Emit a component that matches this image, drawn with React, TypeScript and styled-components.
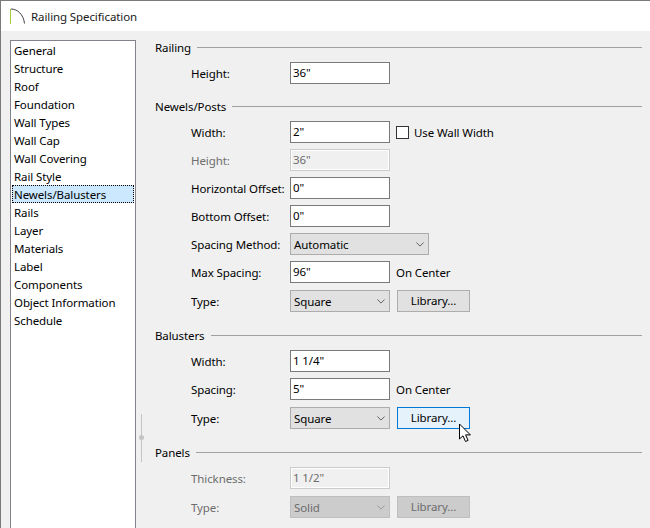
import React from "react";
import styled, { createGlobalStyle } from "styled-components";

const Global = createGlobalStyle`
  html, body { margin: 0; padding: 0; background: #f0f0f0; }
  body { font-family: "Noto Sans", "Open Sans", sans-serif; font-size: 11.5px; letter-spacing: -0.1px; color: #000; }
  #root { width: 650px; height: 528px; overflow: hidden; }
`;

const Window = styled.div`
  position: relative;
  width: 650px;
  height: 528px;
  box-sizing: border-box;
  border-top: 1px solid #7a7a7a;
  border-left: 1px solid #7a7a7a;
  background: #f0f0f0;
  overflow: hidden;
`;
const TitleBar = styled.div`
  height: 30px;
  background: #fff;
  display: flex;
  align-items: center;
  padding-left: 9px;
  gap: 5px;
  color: #1a1a1a;
`;
const Body = styled.div`
  display: flex;
  padding: 9px 0 0 9px;
  height: 488px;
`;
const List = styled.div`
  width: 126px;
  height: 520px;
  flex: none;
  box-sizing: border-box;
  border: 1px solid #82828a;
  background: #fff;
  padding: 0 1px;
  display: flex;
  flex-direction: column;
`;
const ListItem = styled.div<{ $selected?: boolean }>`
  height: 18px;
  line-height: 19px;
  box-sizing: border-box;
  padding-left: 2px;
  white-space: nowrap;
  ${(p) => (p.$selected ? "background:#cce8ff; outline:1px dotted #000; outline-offset:-1px;" : "")}
`;
const Form = styled.div`
  flex: 1;
  padding: 0 8px 0 19px;
  display: flex;
  flex-direction: column;
`;
const Section = styled.section<{ $mb: number }>`
  margin-bottom: ${(p) => p.$mb}px;
`;
const Heading = styled.div`
  display: flex;
  align-items: flex-start;
  gap: 6px;
  height: 14px;
  line-height: 16px;
  margin-bottom: 8px;
  &::after {
    content: "";
    flex: 1;
    height: 1px;
    margin-top: 7px;
    background: #a0a0a0;
  }
`;
const Row = styled.div<{ $mb?: number }>`
  display: flex;
  align-items: center;
  height: 22px;
  margin-bottom: ${(p) => p.$mb ?? 6}px;
  padding-left: 36px;
  &:last-child { margin-bottom: 0; }
`;
const Label = styled.div<{ $disabled?: boolean }>`
  width: 99px;
  flex: none;
  white-space: nowrap;
  color: ${(p) => (p.$disabled ? "#6d6d6d" : "#000")};
`;
const Input = styled.div<{ $disabled?: boolean }>`
  width: 100px;
  height: 22px;
  flex: none;
  box-sizing: border-box;
  border: 1px solid ${(p) => (p.$disabled ? "#cccccc" : "#7a7a7a")};
  background: ${(p) => (p.$disabled ? "#f0f0f0" : "#fff")};
  color: ${(p) => (p.$disabled ? "#6d6d6d" : "#000")};
  line-height: 19px;
  padding-left: 2px;
  ${(p) => (p.$disabled ? "box-shadow: inset 0 0 0 1px #fff;" : "")}
`;
const Select = styled.div<{ $w: number; $disabled?: boolean }>`
  width: ${(p) => p.$w}px;
  height: 22px;
  flex: none;
  box-sizing: border-box;
  border: 1px solid ${(p) => (p.$disabled ? "#bfbfbf" : "#acacac")};
  background: ${(p) => (p.$disabled ? "#cccccc" : "#e1e1e1")};
  color: ${(p) => (p.$disabled ? "#6d6d6d" : "#000")};
  display: flex;
  align-items: center;
  justify-content: space-between;
  padding: 0 4px 0 3px;
  svg { display: block; }
`;
const Button = styled.div<{ $disabled?: boolean; $hover?: boolean }>`
  width: 73px;
  height: 22px;
  flex: none;
  margin-left: 7px;
  box-sizing: border-box;
  border: 1px solid ${(p) => (p.$hover ? "#0078d7" : p.$disabled ? "#bfbfbf" : "#adadad")};
  background: ${(p) => (p.$hover ? "#e5f1fb" : p.$disabled ? "#cccccc" : "#e1e1e1")};
  color: ${(p) => (p.$disabled ? "#6d6d6d" : "#000")};
  text-align: center;
  line-height: 19px;
`;
const Note = styled.div`
  margin-left: 6px;
  white-space: nowrap;
`;
const CheckBox = styled.div`
  width: 13px;
  height: 13px;
  box-sizing: border-box;
  border: 1px solid #333;
  background: #fff;
  margin: 0 5px 0 6px;
  flex: none;
`;
const Splitter = styled.div`
  position: absolute;
  left: 140px;
  top: 413px;
  width: 1px;
  height: 48px;
  background: #c4c4c4;
  &::after {
    content: "";
    position: absolute;
    left: -2px;
    top: 21px;
    width: 5px;
    height: 5px;
    border-radius: 50%;
    background: #c4c4c4;
  }
`;
const Cursor = styled.svg`
  position: absolute;
  left: 457px;
  top: 422px;
`;

const Chevron = ({ color = "#606060" }: { color?: string }) => (
  <svg width="8" height="5" viewBox="0 0 8 5" fill="none">
    <path d="M.4.5L4 4.1 7.6.5" stroke={color} strokeWidth="1" />
  </svg>
);

const items = ["General","Structure","Roof","Foundation","Wall Types","Wall Cap","Wall Covering","Rail Style","Newels/Balusters","Rails","Layer","Materials","Label","Components","Object Information","Schedule"];

export default function App() {
  return (
    <Window>
      <Global />
      <TitleBar>
        <svg width="16" height="16" viewBox="0 0 16 16" fill="none">
          <path d="M.5 1v15" stroke="#a6ce39" strokeWidth="1" />
          <path d="M1 1c6 0 12.5 5 13.5 14.5" stroke="#444" strokeWidth="1" />
        </svg>
        <span>Railing Specification</span>
      </TitleBar>
      <Body>
        <List>
          {items.map((t) => (
            <ListItem key={t} $selected={t === "Newels/Balusters"}>{t}</ListItem>
          ))}
        </List>
        <Form>
          <Section $mb={15}>
            <Heading>Railing</Heading>
            <Row><Label>Height:</Label><Input>36"</Input></Row>
          </Section>
          <Section $mb={16}>
            <Heading>Newels/Posts</Heading>
            <Row><Label>Width:</Label><Input>2"</Input><CheckBox /><span>Use Wall Width</span></Row>
            <Row><Label $disabled>Height:</Label><Input $disabled>36"</Input></Row>
            <Row><Label>Horizontal Offset:</Label><Input>0"</Input></Row>
            <Row><Label>Bottom Offset:</Label><Input>0"</Input></Row>
            <Row><Label>Spacing Method:</Label><Select $w={139}>Automatic<Chevron /></Select></Row>
            <Row $mb={7}><Label>Max Spacing:</Label><Input>96"</Input><Note>On Center</Note></Row>
            <Row><Label>Type:</Label><Select $w={100}>Square<Chevron /></Select><Button>Library...</Button></Row>
          </Section>
          <Section $mb={16}>
            <Heading>Balusters</Heading>
            <Row><Label>Width:</Label><Input>1 1/4"</Input></Row>
            <Row $mb={7}><Label>Spacing:</Label><Input>5"</Input><Note>On Center</Note></Row>
            <Row><Label>Type:</Label><Select $w={100}>Square<Chevron /></Select><Button $hover>Library...</Button></Row>
          </Section>
          <Section $mb={0}>
            <Heading>Panels</Heading>
            <Row $mb={7}><Label $disabled>Thickness:</Label><Input $disabled>1 1/2"</Input></Row>
            <Row><Label $disabled>Type:</Label><Select $w={100} $disabled>Solid<Chevron color="#9a9a9a" /></Select><Button $disabled>Library...</Button></Row>
          </Section>
        </Form>
      </Body>
      <Splitter />
      <Cursor width="14" height="20" viewBox="0 0 14 20">
        <path d="M1.5 1v15l3.5-3.2 2.5 5.7 2.6-1.1-2.5-5.5h4.8z" fill="#fff" stroke="#000" strokeWidth="1" />
      </Cursor>
    </Window>
  );
}
